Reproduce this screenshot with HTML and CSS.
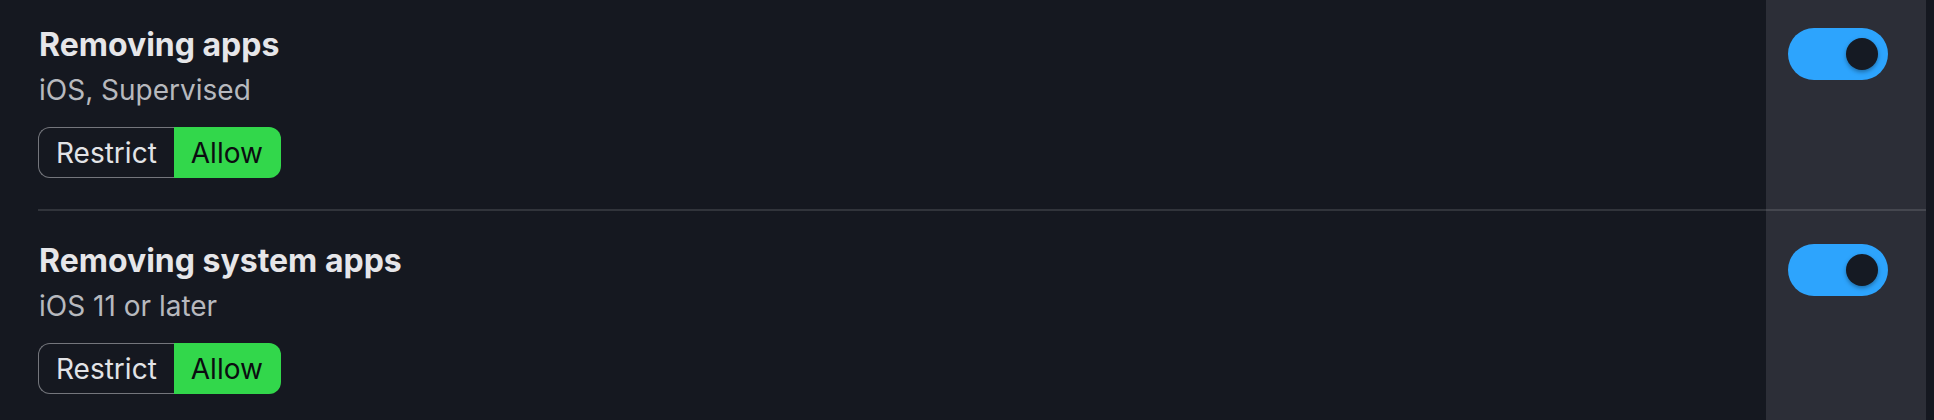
FILE: index.html
```html
<!DOCTYPE html>
<html lang="en">
<head>
<meta charset="utf-8">
<title>Restrictions</title>
<link rel="stylesheet" href="styles.css">
</head>
<body>
<div class="list">
  <div class="row">
    <div class="row-main">
      <div class="title">Removing apps</div>
      <div class="subtitle">iOS, Supervised</div>
      <div class="segmented">
        <span class="seg seg-off">Restrict</span>
        <span class="seg seg-on">Allow</span>
      </div>
    </div>
    <div class="row-side">
      <div class="toggle"><span class="knob"></span></div>
    </div>
  </div>
  <div class="row">
    <div class="row-main">
      <div class="title">Removing system apps</div>
      <div class="subtitle">iOS 11 or later</div>
      <div class="segmented">
        <span class="seg seg-off">Restrict</span>
        <span class="seg seg-on">Allow</span>
      </div>
    </div>
    <div class="row-side">
      <div class="toggle"><span class="knob"></span></div>
    </div>
  </div>
</div>
</body>
</html>
```
FILE: styles.css
```css
html, body {
  margin: 0;
  padding: 0;
  background: #151820;
  font-family: Inter, "Noto Sans", "Liberation Sans", sans-serif;
  overflow: hidden;
}

.list {
  margin: -5px 8px 0 38px;
}

.row {
  display: flex;
}

.row-main {
  flex: 1;
  padding: 33px 0 31px 0;
  border-bottom: 2px solid rgba(255, 255, 255, 0.12);
}

.row-side {
  width: 160px;
  box-sizing: border-box;
  background: #2c2e37;
  padding: 33px 0 0 22px;
  border-bottom: 2px solid rgba(255, 255, 255, 0.12);
}

.title {
  font-size: 32px;
  font-weight: 700;
  line-height: 33px;
  color: #e6e6e9;
  padding-left: 1px;
}

.subtitle {
  margin-top: 11px;
  font-size: 28px;
  line-height: 36px;
  color: #b7b9be;
  padding-left: 1px;
}

.segmented {
  display: inline-flex;
  margin-top: 19px;
  height: 51px;
}

.seg {
  display: flex;
  align-items: center;
  box-sizing: border-box;
  font-size: 28px;
  padding: 0 17px;
}

.seg-off {
  color: #e2e3e6;
  border: 1.5px solid #74767c;
  border-right: none;
  border-radius: 12px 0 0 12px;
}

.seg-on {
  background: #32d74b;
  color: #0b0d10;
  padding: 0 18px 0 17px;
  border-radius: 0 12px 12px 0;
}

.toggle {
  width: 100px;
  height: 52px;
  border-radius: 26px;
  background: #2da4fd;
  display: flex;
  align-items: center;
  justify-content: flex-end;
  padding-right: 10px;
  box-sizing: border-box;
}

.knob {
  width: 32px;
  height: 32px;
  border-radius: 50%;
  background: #151a23;
  box-shadow: 0 2px 4px rgba(0, 0, 0, 0.35);
}
```
